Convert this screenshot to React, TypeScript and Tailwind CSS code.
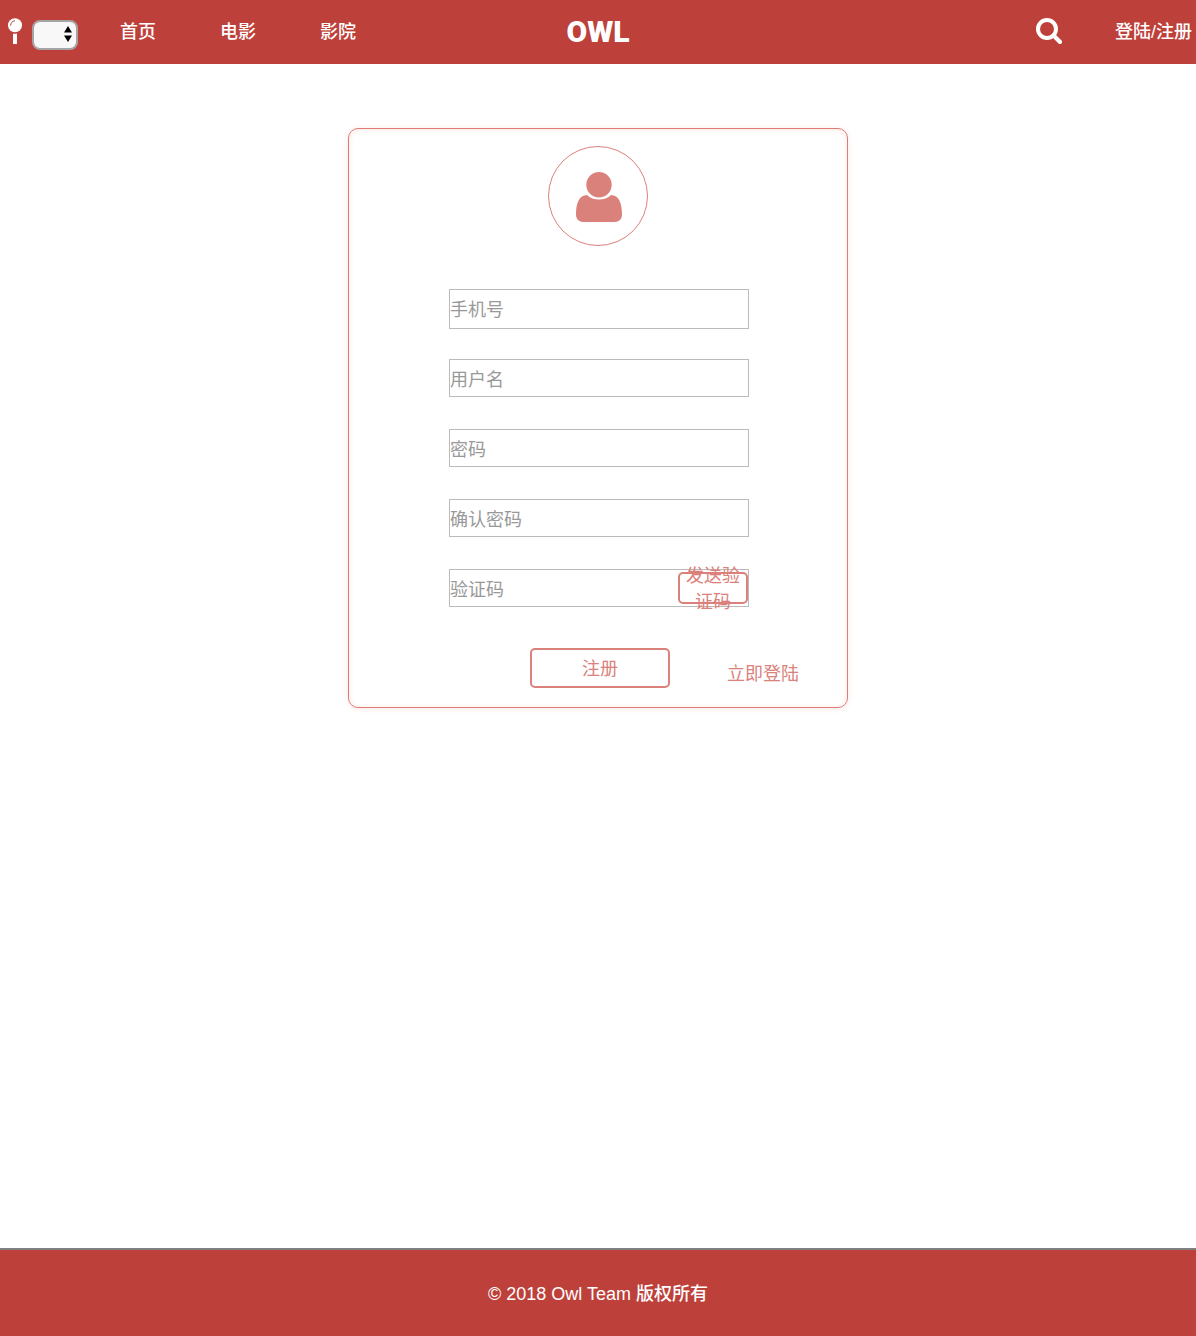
const navItems = ["首页", "电影", "影院"];

const fields = [
  { id: "phone", label: "手机号", type: "tel", size: "h-10 pt-0.5" },
  { id: "username", label: "用户名", type: "text", size: "h-[38px] pt-1" },
  { id: "password", label: "密码", type: "password", size: "h-[38px] pt-1" },
  { id: "confirm", label: "确认密码", type: "password", size: "h-[38px] pt-1" },
  { id: "code", label: "验证码", type: "text", size: "h-[38px] pt-1" },
];

function PinIcon() {
  return (
    <svg className="h-[26px] w-[14px]" viewBox="0 0 14 26" aria-hidden="true">
      <circle cx="7" cy="7.200" r="7" fill="#fff" />
      <path d="M2.6 7.6C2.6 5 4.4 3 7 2.7" fill="none" stroke="#be403a" strokeWidth="1" />
      <path d="M5 15.4c1.3.4 2.7.4 4 0V26H5z" fill="#fff" />
    </svg>
  );
}

function SearchIcon() {
  return (
    <svg className="block size-[26px]" viewBox="0 0 26 26" fill="none" stroke="#fff" aria-hidden="true">
      <circle cx="11" cy="11" r="9" strokeWidth="4" />
      <path d="M17.6 17.6 24 24" strokeWidth="4.2" strokeLinecap="round" />
    </svg>
  );
}

function UserIcon() {
  return (
    <svg className="h-[50px] w-[46px]" viewBox="0 0 46 50" fill="#db817b" aria-hidden="true">
      <circle cx="23" cy="12.7" r="12.7" />
      <path d="M11 23c3 3 7.300 4.600 12 4.600S32 26 35 23c8 0 11 8.500 11 19.500 0 4.600-3 7.500-7.500 7.500h-31C3 50 0 47.100 0 42.500 0 31.500 3 23 11 23z" />
    </svg>
  );
}

function Header() {
  return (
    <header className="grid h-16 grid-cols-[1fr_auto_1fr] items-center bg-[#be403a] font-medium text-white">
      <div className="flex items-center pl-2">
        <div className="pb-0.5">
          <PinIcon />
        </div>
        <div className="relative mt-1.5 ml-2.5">
          <select
            aria-label="城市"
            className="block h-[30px] w-[46px] appearance-none rounded-lg border-2 border-[#a5a5a5] bg-[#f8f8f8] text-black"
          />
          <svg
            className="pointer-events-none absolute top-1.5 right-1.5 h-4 w-2"
            viewBox="0 0 8 16"
            aria-hidden="true"
          >
            <path d="M4 0 8 6.500H0zM4 16 0 9.500h8z" fill="#000" />
          </svg>
        </div>
        <nav className="ml-[42px] flex gap-16">
          {navItems.map((item) => (
            <a key={item} href="#" className="whitespace-nowrap">
              {item}
            </a>
          ))}
        </nav>
      </div>
      <a href="#" className="font-['Roboto'] text-[30px] leading-8 font-black">
        OWL
      </a>
      <div className="flex items-center justify-end gap-[53px] pr-1">
        <button type="button" aria-label="搜索" className="pb-0.5">
          <SearchIcon />
        </button>
        <a href="#" className="whitespace-nowrap">
          登陆/注册
        </a>
      </div>
    </header>
  );
}

function RegisterForm() {
  return (
    <form className="flex w-full max-w-[500px] flex-col items-center rounded-[10px] border border-[#e07b75] px-12 pt-[17px] pb-[19px] text-[#db817b] shadow-[0_1px_6px_#fae8e7,inset_0_1px_6px_#fae8e7]">
      <div className="flex size-[100px] items-center justify-center rounded-full border border-[#db817b] pt-0.5 pl-0.5">
        <UserIcon />
      </div>
      <div className="mt-[43px] w-[300px] max-w-full">
        {fields.map((field) => (
          <div key={field.id} className="relative ml-px h-[70px] w-full">
            <input
              id={field.id}
              type={field.type}
              aria-label={field.label}
              placeholder={field.label}
              className={`block w-full border border-[#bbb] placeholder:text-[#999] ${field.size}`}
            />
            {field.id === "code" && (
              <button
                type="button"
                className="absolute top-[3px] right-px flex h-8 w-[70px] items-center justify-center rounded-[5px] border-2 border-[#db817b] pt-0.5 leading-[26px]"
              >
                发送验证码
              </button>
            )}
          </div>
        ))}
      </div>
      <div className="mt-[9px] grid w-full grid-cols-[1fr_140px_1fr] items-center">
        <button
          type="submit"
          className="col-start-2 ml-0.5 h-10 w-[140px] rounded-[5px] border-2 border-[#db817b] pt-0.5"
        >
          注册
        </button>
        <a href="#" className="mt-3 justify-self-end whitespace-nowrap">
          立即登陆
        </a>
      </div>
    </form>
  );
}

export default function App() {
  return (
    <div className="flex min-h-screen flex-col bg-white font-['Liberation_Sans','Noto_Sans_CJK_SC',sans-serif] text-lg leading-[26px]">
      <Header />
      <main className="flex flex-1 items-start justify-center px-4 py-16">
        <RegisterForm />
      </main>
      <footer className="flex h-[88px] items-center justify-center border-t-2 border-[#808080] bg-[#be403a] pt-0.5 font-medium text-white">
        © 2018 Owl Team 版权所有
      </footer>
    </div>
  );
}
